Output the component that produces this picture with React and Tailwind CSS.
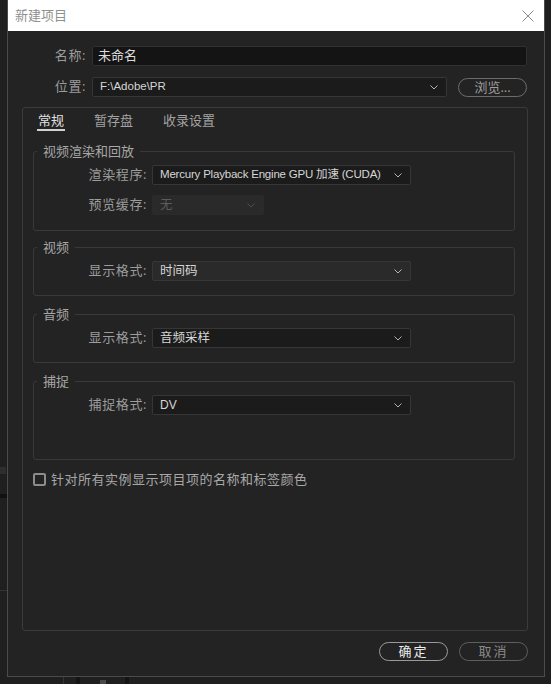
import React, { useState } from "react";

function Chevron({ color = "#b4b4b4" }) {
  return (
    <svg width="8" height="5" viewBox="0 0 8 5" className="shrink-0">
      <polyline points="0.5,0.5 4,4 7.5,0.5" fill="none" stroke={color} strokeWidth="1" />
    </svg>
  );
}

function Select({ value, className, textClass = "", disabled }) {
  return (
    <div
      className={`h-[20px] flex items-center justify-between pl-[7px] pr-[8px] rounded-[2px] border ${
        disabled
          ? "bg-[#2a2a2a] border-[#2a2a2a] text-[#5c5c5c]"
          : "border-[#363636] text-[#d6d6d6]"
      } ${className}`}
    >
      <span className={`whitespace-nowrap font-['Liberation_Sans','Noto_Sans_CJK_SC',sans-serif] ${textClass}`}>
        {value}
      </span>
      <Chevron color={disabled ? "#4e4e4e" : "#b4b4b4"} />
    </div>
  );
}

function Group({ title, className = "", children }) {
  return (
    <fieldset className={`ml-[10px] w-[482px] border border-[#393939] rounded-[3px] ${className}`}>
      <legend className="ml-[3px] px-[6px] h-[16px] leading-[16px] text-[#a6a6a6]">{title}</legend>
      {children}
    </fieldset>
  );
}

function Row({ label, children }) {
  return (
    <div className="flex items-center gap-[5px]">
      <span className="w-[113px] text-right text-[#9c9c9c] tracking-[0.6px]">{label}</span>
      {children}
    </div>
  );
}

export default function App() {
  const [tab, setTab] = useState("常规");
  const [showColors, setShowColors] = useState(false);
  const tabs = ["常规", "暂存盘", "收录设置"];

  return (
    <div className="relative w-[551px] h-[684px] overflow-hidden bg-[#1f1f1f] text-[13px] font-['Open_Sans','Noto_Sans_CJK_SC',sans-serif]">
      {/* bits of the app window behind the dialog */}
      <div className="absolute left-0 top-[590px] w-[7px] h-px bg-[#343434]" />
      <div className="absolute left-0 top-[467px] w-[6px] h-[7px] bg-[#2e2e2e]" />
      <div className="absolute left-0 top-[494px] w-[7px] h-[4px] bg-[#111]" />
      <div className="absolute left-[63px] top-[677px] w-px h-[7px] bg-[#353535]" />
      <div className="absolute left-[76px] top-[677px] w-[4px] h-[7px] bg-[#141414]" />
      <div className="absolute left-[125px] top-[677px] w-[4px] h-[7px] bg-[#141414]" />
      <div className="absolute left-[100px] top-[680px] w-[6px] h-[4px] bg-[#4a4a4a]" />

      <div className="ml-[7px] w-[538px] h-[677px] flex flex-col border border-t-0 border-[#4b4b4b] bg-[#232323]">
        {/* title bar */}
        <div className="h-[31px] shrink-0 flex items-center justify-between pl-[7px] pr-[10px] bg-white">
          <span className="text-[#8f8f8f]">新建项目</span>
          <svg width="12" height="12" viewBox="0 0 12 12">
            <path d="M0.5 0.5 L11.5 11.5 M11.5 0.5 L0.5 11.5" stroke="#8a8a8a" strokeWidth="1" />
          </svg>
        </div>

        {/* name */}
        <div className="mt-[15px] flex items-center gap-[6px]">
          <span className="w-[78px] text-right text-[#9c9c9c] tracking-[0.6px]">名称:</span>
          <div className="w-[435px] h-[20px] flex items-center pl-[5px] rounded-[2px] bg-[#141414] border border-[#303030] text-[#dcdcdc]">
            未命名
          </div>
        </div>

        {/* location */}
        <div className="mt-[11px] flex items-center gap-[6px]">
          <span className="w-[78px] text-right text-[#9c9c9c] tracking-[0.6px]">位置:</span>
          <Select value="F:\Adobe\PR" className="w-[355px] bg-[#1b1b1b]" textClass="text-[11.5px]" />
          <button className="ml-[5px] w-[69px] h-[19px] rounded-full border-[1.5px] border-[#6c6c6c] text-[#9e9e9e] leading-none">
            浏览...
          </button>
        </div>

        {/* settings panel */}
        <div className="mt-[10px] ml-[14px] w-[506px] h-[524px] shrink-0 border border-[#3b3b3b] rounded-[3px]">
          <div className="flex gap-[28px] pl-[14px] pt-[3px]">
            {tabs.map((t) => (
              <button
                key={t}
                onClick={() => setTab(t)}
                className={`px-[1px] h-[20px] leading-[16px] border-b-2 ${
                  tab === t ? "border-[#d2d2d2] text-[#e2e2e2]" : "border-transparent text-[#a2a2a2]"
                }`}
              >
                {t}
              </button>
            ))}
          </div>

          <Group title="视频渲染和回放" className="mt-[12px] pt-[6px] pb-[15px]">
            <div className="flex flex-col gap-[10px]">
              <Row label="渲染程序:">
                <Select
                  value="Mercury Playback Engine GPU 加速 (CUDA)"
                  className="w-[259px] bg-[#1b1b1b]"
                  textClass="text-[11.5px] tracking-[-0.2px]"
                />
              </Row>
              <Row label="预览缓存:">
                <Select value="无" className="w-[112px]" textClass="text-[12.5px]" disabled />
              </Row>
            </div>
          </Group>

          <Group title="视频" className="mt-[8px] pt-[6px] pb-[14px]">
            <Row label="显示格式:">
              <Select value="时间码" className="w-[259px] bg-[#2a2a2a]" textClass="text-[12.5px]" />
            </Row>
          </Group>

          <Group title="音频" className="mt-[10px] pt-[6px] pb-[14px]">
            <Row label="显示格式:">
              <Select value="音频采样" className="w-[259px] bg-[#1b1b1b]" textClass="text-[12.5px]" />
            </Row>
          </Group>

          <Group title="捕捉" className="mt-[10px] pt-[6px] pb-[44px]">
            <Row label="捕捉格式:">
              <Select value="DV" className="w-[259px] bg-[#1b1b1b]" textClass="text-[12px]" />
            </Row>
          </Group>

          <label className="mt-[10px] ml-[10px] flex items-center gap-[5px] cursor-pointer">
            <span
              onClick={() => setShowColors(!showColors)}
              className="w-[13px] h-[13px] rounded-[2px] border-2 border-[#8c8c8c] flex items-center justify-center"
            >
              {showColors && <span className="w-[5px] h-[5px] bg-[#cfcfcf]" />}
            </span>
            <span className="text-[#a8a8a8] tracking-[0.5px]">针对所有实例显示项目项的名称和标签颜色</span>
          </label>
        </div>

        {/* footer */}
        <div className="mt-[11px] flex justify-end gap-[11px] pr-[16px]">
          <button className="w-[69px] h-[19px] rounded-full border-[1.5px] border-[#9a9a9a] text-[#ececec] leading-none tracking-[2px]">
            确定
          </button>
          <button className="w-[69px] h-[19px] rounded-full border-[1.5px] border-[#5e5e5e] text-[#8a8a8a] leading-none tracking-[2px]">
            取消
          </button>
        </div>
      </div>
    </div>
  );
}
